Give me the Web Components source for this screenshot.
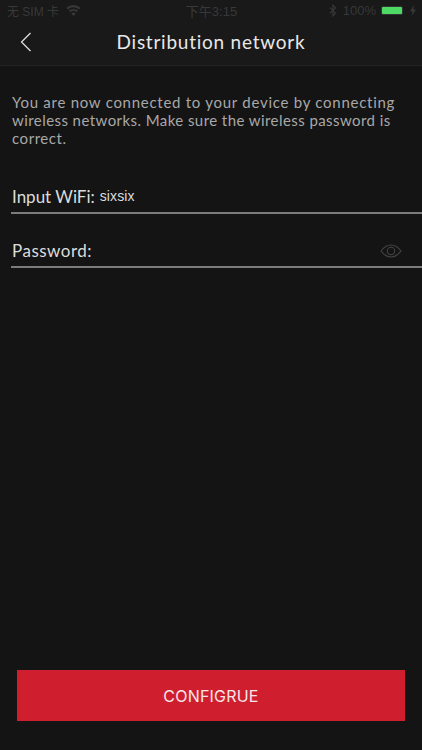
<!DOCTYPE html>
<html>
<head>
<meta charset="utf-8">
<style>
  html, body { margin: 0; height: 100%; background: #141414; }
  body { font-family: "Lato", sans-serif; }
  .l1 { display: block; letter-spacing: .73px; white-space: nowrap; }
  .l2 { display: block; letter-spacing: .43px; white-space: nowrap; }
</style>
</head>
<body>
<config-page>
  <app-statusbar slot="status"></app-statusbar>
  <app-navbar slot="nav">Distribution network</app-navbar>
  <p slot="intro"><span class="l1">You are now connected to your device by connecting</span> <span class="l2">wireless networks. Make sure the wireless password is</span> correct.</p>
  <form-row slot="fields" label="Input WiFi:" value="sixsix" tight></form-row>
  <form-row slot="fields" label="Password:" eye></form-row>
  <red-button slot="action">CONFIGRUE</red-button>
</config-page>
<script>
class AppStatusbar extends HTMLElement {
  constructor() {
    super();
    this.attachShadow({ mode: "open" });
    this.shadowRoot.innerHTML = `
    <style>
      :host {
        display: grid;
        grid-template-columns: 1fr auto 1fr;
        align-items: center;
        height: 20px;
        padding: 0 6px 0 7px;
        font: 13px "Liberation Sans", "Noto Sans CJK SC", sans-serif;
        color: #383838;
      }
      .left, .right { display: flex; align-items: center; }
      .right { justify-content: flex-end; }
      .sim { font-size: 12px; }
      .left svg { margin-left: 7px; }
      .batt {
        width: 20px; height: 7px; margin: 0 7px 0 5px;
        background: #4cd964; border: 1px solid #333; border-radius: 2px;
      }
    </style>
    <div class="left"><span class="sim">无 SIM 卡</span>
      <svg width="15" height="11" viewBox="0 0 15 11" fill="#383838"><path d="M7.500 11 5.300 8.400a3.300 3.300 0 0 1 4.400 0zM4.300 7.200 2.900 5.600a7 7 0 0 1 9.200 0l-1.400 1.600a5 5 0 0 0-6.400 0zM1.900 4.400.4 2.800a10.600 10.600 0 0 1 14.200 0l-1.500 1.600a8.400 8.400 0 0 0-11.200 0z"/></svg>
    </div>
    <div>下午3:15</div>
    <div class="right">
      <svg width="8" height="13" viewBox="0 0 9 14" fill="none" stroke="#383838" stroke-width="1.300"><path d="M1 3.800 7.400 10 4.400 13V1l3 3L1 10.200"/></svg>
      <span style="margin-left:6px">100%</span>
      <span class="batt"></span>
      <svg width="6" height="11" viewBox="0 0 6 11" fill="#383838"><path d="M3.800 0 0 6.300h2.400L1.900 11 6 4.500H3.400z"/></svg>
    </div>`;
  }
}

class AppNavbar extends HTMLElement {
  constructor() {
    super();
    this.attachShadow({ mode: "open" });
    this.shadowRoot.innerHTML = `
    <style>
      :host {
        display: grid;
        grid-template-columns: 1fr auto 1fr;
        align-items: center;
        height: 43px;
        padding-bottom: 2px;
        border-bottom: 1px solid #222;
        color: #e8e8e8;
        font-size: 19px;
        letter-spacing: .76px;
      }
      svg { margin-left: 20px; display: block; }
    </style>
    <svg width="12" height="20" viewBox="0 0 12 20" fill="none" stroke="#ddd" stroke-width="1.300"><path d="M10.500 1 1.500 10l9 9"/></svg>
    <div><slot></slot></div>
    <div></div>`;
  }
}

class FormRow extends HTMLElement {
  constructor() {
    super();
    this.attachShadow({ mode: "open" });
  }
  connectedCallback() {
    const eye = this.hasAttribute("eye") ? `
      <svg width="22" height="14" viewBox="0 0 22 14" fill="none" stroke="#444" stroke-width="1.100">
        <path d="M1 7C4 3 7.500 1 11 1s7 2 10 6c-3 4-6.500 6-10 6S4 11 1 7z"/><circle cx="11" cy="7" r="3.700"/>
      </svg>` : "";
    const spacing = this.hasAttribute("tight") ? "0" : ".5px";
    this.shadowRoot.innerHTML = `
    <style>
      :host {
        display: flex;
        align-items: center;
        box-sizing: border-box;
        height: 35px;
        margin-left: 11px;
        padding: 2px 0 0 1px;
        border-bottom: 2px solid #7c7c7c;
        color: #dcdcdc;
        font-size: 17px;
        letter-spacing: ${spacing};
      }
      .value {
        margin-left: 5px;
        font: 14px "Liberation Sans", sans-serif;
        letter-spacing: .1px;
        flex: 1;
        position: relative;
        top: -1px;
      }
      svg { margin-right: 20px; }
    </style>
    <span>${this.getAttribute("label")}</span>
    <span class="value">${this.getAttribute("value") || ""}</span>
    ${eye}`;
  }
}

class RedButton extends HTMLElement {
  constructor() {
    super();
    this.attachShadow({ mode: "open" });
    this.shadowRoot.innerHTML = `
    <style>
      :host {
        display: flex;
        align-items: center;
        justify-content: center;
        height: 51px;
        background: #cf1f2e;
        color: #f6e6e8;
        font: 16px "Inter", sans-serif;
        letter-spacing: .2px;
      }
    </style>
    <slot></slot>`;
  }
}

class ConfigPage extends HTMLElement {
  constructor() {
    super();
    this.attachShadow({ mode: "open" });
    this.shadowRoot.innerHTML = `
    <style>
      :host {
        display: flex;
        flex-direction: column;
        height: 750px;
        background: #141414;
      }
      .head { background: #191919; }
      .intro {
        padding: 27px 12px 0;
        height: 92px;
        box-sizing: border-box;
        color: #a8a8a8;
        font-size: 15px;
        line-height: 18px;
        letter-spacing: .55px;
      }
      ::slotted(p) { margin: 0; }
      .fields { display: flex; flex-direction: column; gap: 19px; margin-top: 21px; }
      .foot { margin-top: auto; padding: 0 17px 29px; }
    </style>
    <div class="head"><slot name="status"></slot><slot name="nav"></slot></div>
    <div class="intro"><slot name="intro"></slot></div>
    <div class="fields"><slot name="fields"></slot></div>
    <div class="foot"><slot name="action"></slot></div>`;
  }
}

customElements.define("app-statusbar", AppStatusbar);
customElements.define("app-navbar", AppNavbar);
customElements.define("form-row", FormRow);
customElements.define("red-button", RedButton);
customElements.define("config-page", ConfigPage);
</script>
</body>
</html>
